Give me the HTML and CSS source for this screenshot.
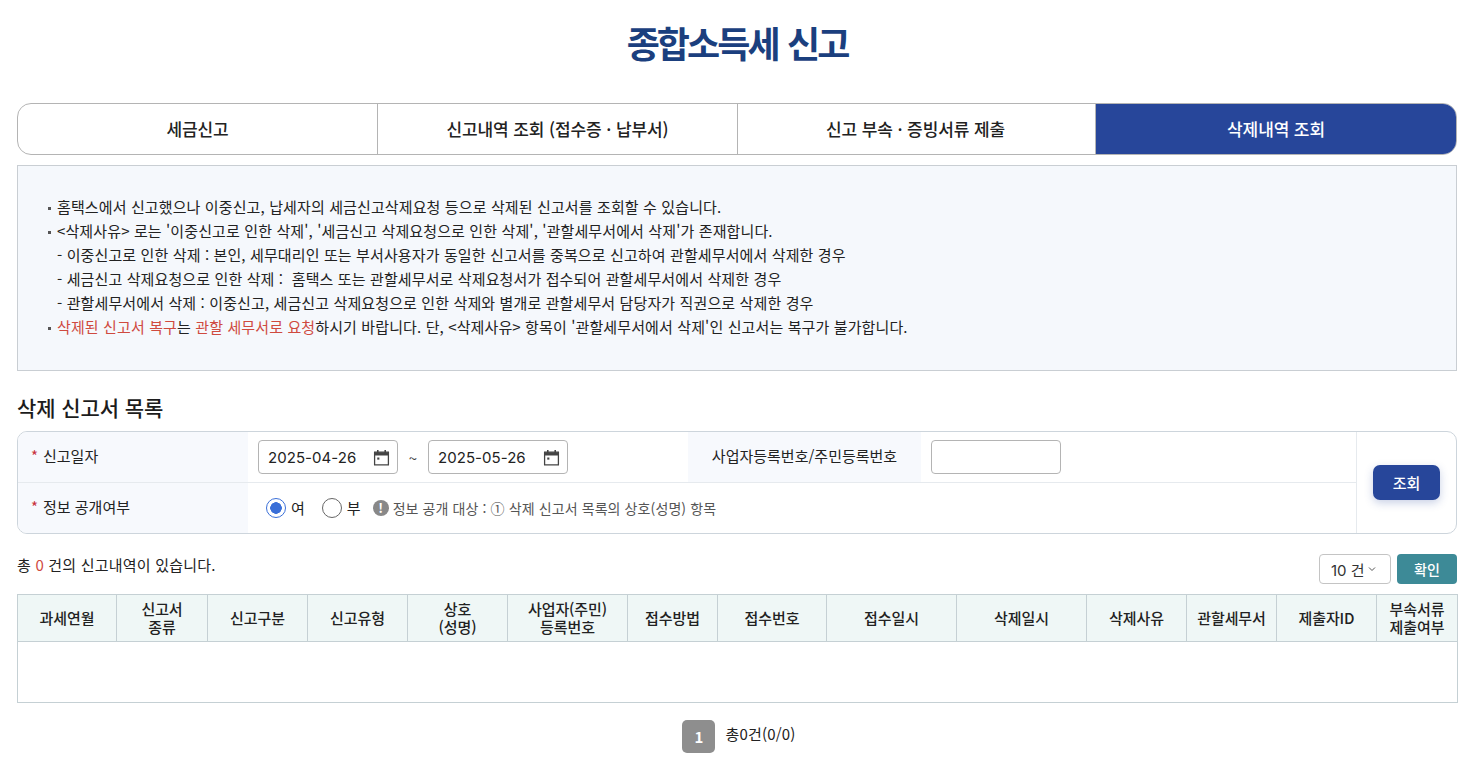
FILE: index.html
```html
<!DOCTYPE html>
<html lang="ko">
<head>
<meta charset="utf-8">
<title>종합소득세 신고</title>
<link rel="stylesheet" href="styles.css">
</head>
<body>
<main class="page">
  <h1 class="title">종합소득세 신고</h1>
  <nav class="tabs">
    <a class="tab">세금신고</a>
    <a class="tab">신고내역 조회 (접수증 · 납부서)</a>
    <a class="tab">신고 부속 · 증빙서류 제출</a>
    <a class="tab active">삭제내역 조회</a>
  </nav>
  <section class="notice">
    <p class="bullet">홈택스에서 신고했으나 이중신고, 납세자의 세금신고삭제요청 등으로 삭제된 신고서를 조회할 수 있습니다.</p>
    <p class="bullet">&lt;삭제사유&gt; 로는 '이중신고로 인한 삭제', '세금신고 삭제요청으로 인한 삭제', '관할세무서에서 삭제'가 존재합니다.</p>
    <p class="sub">- 이중신고로 인한 삭제 : 본인, 세무대리인 또는 부서사용자가 동일한 신고서를 중복으로 신고하여 관할세무서에서 삭제한 경우</p>
    <p class="sub">- 세금신고 삭제요청으로 인한 삭제 :&nbsp; 홈택스 또는 관할세무서로 삭제요청서가 접수되어 관할세무서에서 삭제한 경우</p>
    <p class="sub">- 관할세무서에서 삭제 : 이중신고, 세금신고 삭제요청으로 인한 삭제와 별개로 관할세무서 담당자가 직권으로 삭제한 경우</p>
    <p class="bullet"><span class="red">삭제된 신고서 복구</span>는 <span class="red">관할 세무서로 요청</span>하시기 바랍니다. 단, &lt;삭제사유&gt; 항목이 '관할세무서에서 삭제'인 신고서는 복구가 불가합니다.</p>
  </section>
  <h2 class="section-title">삭제 신고서 목록</h2>
  <section class="filter">
    <div class="filter-rows">
      <div class="frow">
        <div class="flabel"><span class="star">*</span>신고일자</div>
        <div class="fcell dates">
          <div class="input date"><span>2025-04-26</span>
            <svg class="cal" viewBox="0 0 16 16"><path d="M1.5 3h13v12h-13z" fill="none" stroke="#444" stroke-width="1.2"/><path d="M1.5 3h13v3h-13z" fill="#444"/><path d="M4.5 1v3M11.5 1v3" stroke="#444" stroke-width="1.5"/><rect x="4" y="8" width="2" height="2" fill="#444"/></svg>
          </div>
          <span class="tilde">~</span>
          <div class="input date"><span>2025-05-26</span>
            <svg class="cal" viewBox="0 0 16 16"><path d="M1.5 3h13v12h-13z" fill="none" stroke="#444" stroke-width="1.2"/><path d="M1.5 3h13v3h-13z" fill="#444"/><path d="M4.5 1v3M11.5 1v3" stroke="#444" stroke-width="1.5"/><rect x="4" y="8" width="2" height="2" fill="#444"/></svg>
          </div>
        </div>
        <div class="flabel center">사업자등록번호/주민등록번호</div>
        <div class="fcell"><div class="input idnum"></div></div>
      </div>
      <div class="frow">
        <div class="flabel"><span class="star">*</span>정보 공개여부</div>
        <div class="fcell radios">
          <span class="radio on"></span><span class="rlabel">여</span>
          <span class="radio"></span><span class="rlabel">부</span>
          <span class="help"><span class="excl">!</span>정보 공개 대상 : ① 삭제 신고서 목록의 상호(성명) 항목</span>
        </div>
      </div>
    </div>
    <div class="fbtn"><button class="search">조회</button></div>
  </section>
  <div class="summary">
    <p class="count">총 <span class="red">0</span> 건의 신고내역이 있습니다.</p>
    <div class="pager-size">
      <div class="select">10 건<svg class="chev" viewBox="0 0 8 6"><path d="M1 1.5l3 3 3-3" fill="none" stroke="#555" stroke-width="1"/></svg></div>
      <button class="ok">확인</button>
    </div>
  </div>
  <table class="grid">
    <colgroup>
      <col class="c99"><col class="c91"><col class="c100"><col class="c100"><col class="c100"><col class="c120"><col class="c90"><col class="c109"><col class="c130"><col class="c130"><col class="c100"><col class="c90"><col class="c100"><col class="c81">
    </colgroup>
    <thead>
      <tr>
        <th>과세연월</th><th>신고서<br>종류</th><th>신고구분</th><th>신고유형</th><th>상호<br>(성명)</th><th>사업자(주민)<br>등록번호</th><th>접수방법</th><th>접수번호</th><th>접수일시</th><th>삭제일시</th><th>삭제사유</th><th>관할세무서</th><th>제출자ID</th><th>부속서류<br>제출여부</th>
      </tr>
    </thead>
    <tbody>
      <tr><td colspan="14"></td></tr>
    </tbody>
  </table>
  <div class="paging"><span class="pnum">1</span><span class="ptotal">총0건(0/0)</span></div>
</main>
</body>
</html>
```

FILE: styles.css
```css
* { box-sizing: border-box; }
html, body { margin: 0; padding: 0; background: #fff; }
body {
  font-family: "Noto Sans CJK KR", "Noto Sans", sans-serif;
  color: #222;
  font-size: 15px;
  overflow: hidden;
}
p, h1, h2 { margin: 0; }
.page { width: 1440px; margin-left: 17px; }
.title {
  height: 103px;
  padding-top: 15px;
  text-align: center;
  font-size: 36px;
  line-height: 54px;
  font-weight: 700;
  letter-spacing: -2.9px;
  word-spacing: 2px;
  color: #1b3f7e;
}
.tabs {
  display: flex;
  height: 52px;
  border: 1px solid #b4b4b4;
  border-radius: 14px;
  overflow: hidden;
}
.tab {
  flex: 0 0 360px;
  display: flex;
  align-items: center;
  justify-content: center;
  padding-bottom: 2px;
  font-size: 17px;
  font-weight: 500;
  letter-spacing: -0.1px;
  color: #222;
  border-right: 1px solid #b4b4b4;
}
.tab:nth-child(3) { flex-basis: 358px; padding-right: 2px; }
.tab.active {
  flex: 1;
  background: #27469a;
  color: #fff;
  border-right: 0;
}
.notice {
  height: 206px;
  margin-top: 10px;
  padding: 29px 28px 0;
  background: #f5f8fc;
  border: 1px solid #c9ced3;
  font-size: 15px;
  line-height: 24px;
  letter-spacing: 0.12px;
  color: #222;
}
.bullet { position: relative; padding-left: 11px; }
.bullet::before {
  content: "";
  position: absolute;
  left: 2px;
  top: 12px;
  width: 3px;
  height: 3px;
  background: #555;
}
.sub { padding-left: 11px; }
.red { color: #cf4a3f; }
.section-title {
  margin-top: 24px;
  height: 36px;
  font-size: 21px;
  line-height: 24px;
  font-weight: 500;
  letter-spacing: -0.1px;
  color: #1c1c1c;
}
.filter {
  display: flex;
  height: 103px;
  border: 1px solid #cdd5dc;
  border-radius: 10px;
  overflow: hidden;
}
.filter-rows { width: 1338px; }
.frow { display: flex; height: 50px; }
.frow + .frow { height: 51px; border-top: 1px solid #e6eaee; }
.flabel {
  flex: 0 0 230px;
  display: flex;
  align-items: center;
  padding-left: 13px;
  padding-bottom: 3px;
  background: #f7f9fd;
  font-size: 15px;
  color: #222;
}
.star { color: #c8323c; margin-right: 5px; }
.flabel.center {
  flex-basis: 233px;
  justify-content: center;
  padding-left: 0;
}
.fcell { display: flex; align-items: center; padding-left: 10px; }
.dates { flex: 0 0 440px; }
.input {
  height: 34px;
  background: #fff;
  border: 1px solid #b4b4b4;
  border-radius: 4px;
}
.date {
  width: 140px;
  display: flex;
  align-items: center;
  justify-content: space-between;
  padding: 0 7px 0 9px;
  font-family: Inter, "Noto Sans CJK KR", sans-serif;
  font-size: 15px;
  letter-spacing: 0.05px;
  color: #222;
}
.cal { width: 17px; height: 17px; }
.tilde { width: 30px; text-align: center; color: #444; }
.idnum { width: 130px; }
.radios { padding-left: 18px; padding-bottom: 1px; }
.radio {
  width: 20px;
  height: 20px;
  border: 1px solid #666;
  border-radius: 50%;
  background: #fff;
}
.radio.on {
  border-color: #3a6fd8;
  background: radial-gradient(circle, #3a6fd8 0 5.5px, #fff 6px);
}
.rlabel { margin-left: 5px; margin-right: 17px; font-size: 15px; }
.rlabel + .radio { margin-left: 0; }
.help {
  display: flex;
  align-items: center;
  margin-left: -5px;
  font-size: 14px;
  letter-spacing: 0.1px;
  color: #555;
}
.excl {
  width: 16px;
  height: 16px;
  margin-right: 4px;
  border-radius: 50%;
  background: #888;
  color: #fff;
  font-size: 13px;
  font-weight: 700;
  line-height: 16px;
  text-align: center;
}
.fbtn {
  flex: 1;
  display: flex;
  align-items: center;
  justify-content: center;
  border-left: 1px solid #e6eaee;
}
.search {
  width: 67px;
  height: 35px;
  border: 0;
  border-radius: 7px;
  background: #27469a;
  color: #fff;
  font: 500 15px "Noto Sans CJK KR", sans-serif;
  box-shadow: 0 3px 8px rgba(39, 70, 154, 0.25);
}
.summary {
  display: flex;
  justify-content: space-between;
  height: 60px;
  padding-top: 20px;
}
.count { font-size: 15px; line-height: 22px; color: #222; letter-spacing: 0.2px; }
.pager-size { display: flex; gap: 6px; height: 30px; }
.select {
  width: 72px;
  display: flex;
  align-items: center;
  padding-left: 11px;
  border: 1px solid #c4c4c4;
  border-radius: 4px;
  font-family: Inter, "Noto Sans CJK KR", sans-serif;
  font-size: 15px;
  color: #333;
}
.chev { width: 8px; height: 6px; margin-left: 3px; }
.ok {
  width: 60px;
  border: 0;
  border-radius: 4px;
  background: #3d8a97;
  color: #fff;
  font: 500 14px "Noto Sans CJK KR", sans-serif;
}
.grid {
  width: 1440px;
  table-layout: fixed;
  border-collapse: collapse;
  border: 1px solid #c5d0d4;
}
.c99 { width: 99px; } .c91 { width: 91px; } .c100 { width: 100px; }
.c120 { width: 120px; } .c90 { width: 90px; } .c109 { width: 109px; }
.c130 { width: 130px; } .c81 { width: 81px; }
.grid th {
  height: 47px;
  padding: 0;
  background: #eff7f6;
  border: 1px solid #c5d0d4;
  font-size: 15px;
  line-height: 18px;
  font-weight: 500;
  color: #222;
  letter-spacing: -0.1px;
}
.grid td { height: 61px; }
.paging {
  display: flex;
  justify-content: center;
  align-items: flex-start;
  gap: 10px;
  margin-top: 17px;
  padding-left: 4px;
}
.pnum {
  width: 33px;
  height: 33px;
  background: #8e8e8e;
  border-radius: 5px;
  color: #fff;
  font-weight: 700;
  font-size: 15px;
  line-height: 33px;
  text-align: center;
}
.ptotal { font-size: 15px; line-height: 28px; color: #222; letter-spacing: 0.2px; }
```
